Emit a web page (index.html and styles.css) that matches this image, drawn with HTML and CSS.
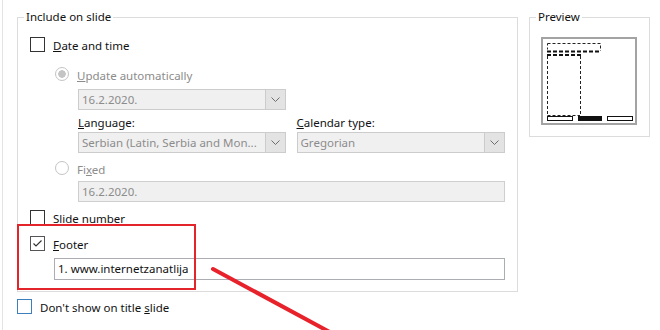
FILE: index.html
```html
<!DOCTYPE html>
<html lang="en">
<head>
    <meta charset="UTF-8">
    <title>Header and Footer</title>
    <link rel="stylesheet" href="styles.css">
</head>

<body>
    <div class="dialog">
        <div class="groups">
            <fieldset class="group include">
                <legend>Include on slide</legend>

                <label class="check"><span class="box"></span><span class="text"><u>D</u>ate and time</span></label>

                <div class="sub">
                    <label class="radio disabled first"><span class="circle"></span><span class="text"><u>U</u>pdate automatically</span></label>

                    <div class="indent">
                        <div class="select disabled date-select">
                            <span class="value">16.2.2020.</span>
                            <span class="drop"><svg width="9" height="5" viewBox="0 0 9 5"><polyline points="0.5,0.5 4.5,4.5 8.5,0.5" fill="none" stroke="#6d6d6d" stroke-width="1"/></svg></span>
                        </div>

                        <div class="pair">
                            <div class="field">
                                <div class="lbl"><u>L</u>anguage:</div>
                                <div class="select disabled">
                                    <span class="value">Serbian (Latin, Serbia and Mon...</span>
                                    <span class="drop"><svg width="9" height="5" viewBox="0 0 9 5"><polyline points="0.5,0.5 4.5,4.5 8.5,0.5" fill="none" stroke="#6d6d6d" stroke-width="1"/></svg></span>
                                </div>
                            </div>
                            <div class="field">
                                <div class="lbl"><u>C</u>alendar type:</div>
                                <div class="select disabled">
                                    <span class="value">Gregorian</span>
                                    <span class="drop"><svg width="9" height="5" viewBox="0 0 9 5"><polyline points="0.5,0.5 4.5,4.5 8.5,0.5" fill="none" stroke="#6d6d6d" stroke-width="1"/></svg></span>
                                </div>
                            </div>
                        </div>
                    </div>

                    <label class="radio disabled second"><span class="circle"></span><span class="text">Fi<u>x</u>ed</span></label>

                    <div class="indent">
                        <div class="textbox disabled fixed-box">16.2.2020.</div>
                    </div>
                </div>

                <label class="check slide-num"><span class="box"></span><span class="text">Slide number</span></label>

                <div class="footer-block">
                    <label class="check"><span class="box checked"><svg width="13" height="13" viewBox="0 0 13 13"><polyline points="2.5,6.5 5,9 10.5,3.5" fill="none" stroke="#333" stroke-width="1.2"/></svg></span><span class="text"><u>F</u>ooter</span></label>
                    <div class="textbox footer-box">1. www.internetzanatlija</div>
                    <div class="highlight"></div>
                </div>
            </fieldset>

            <fieldset class="group preview">
                <legend>Preview</legend>
                <div class="thumb">
                    <svg width="92" height="84" viewBox="0 0 92 84">
                        <!-- title placeholder -->
                        <path d="M4.5 4.5 H57.5 V12" fill="none" stroke="#222" stroke-width="1" stroke-dasharray="3 2"/>
                        <path d="M4.5 4.5 V13" fill="none" stroke="#222" stroke-width="1" stroke-dasharray="2 2"/>
                        <path d="M4 12.5 H57" fill="none" stroke="#111" stroke-width="2" stroke-dasharray="4 2"/>
                        <!-- body placeholder -->
                        <path d="M4 16 H38" fill="none" stroke="#111" stroke-width="2" stroke-dasharray="4 2"/>
                        <path d="M4.5 17 V76" fill="none" stroke="#222" stroke-width="1" stroke-dasharray="3 2"/>
                        <path d="M37.5 17 V77" fill="none" stroke="#222" stroke-width="1" stroke-dasharray="3 2"/>
                        <path d="M4.5 76.5 H37" fill="none" stroke="#222" stroke-width="1" stroke-dasharray="3 2"/>
                        <!-- footer placeholders -->
                        <rect x="4.5" y="77.5" width="25" height="4" fill="#fff" stroke="#111" stroke-width="1"/>
                        <rect x="35" y="77" width="24" height="5" fill="#111"/>
                        <rect x="64.5" y="77.5" width="25" height="4" fill="#fff" stroke="#111" stroke-width="1"/>
                    </svg>
                </div>
            </fieldset>
        </div>

        <label class="check blue"><span class="box"></span><span class="text">Don't show on title <u>s</u>lide</span></label>

        <svg class="arrow" width="660" height="330" viewBox="0 0 660 330">
            <line x1="213" y1="269" x2="350" y2="343" stroke="#e8222b" stroke-width="4" stroke-linecap="round"/>
        </svg>
    </div>
</body>
</html>
```

FILE: styles.css
```css
body {
    margin: 0;
    background-color: #fff;
    font-family: "Noto Sans", "Open Sans", sans-serif;
    font-size: 11.5px;
    color: #111;
    overflow: hidden;
}

.dialog {
    position: relative;
    height: 330px;
    margin-left: 2px;
    border-left: 1px solid #e3e3e3;
}

.groups {
    display: flex;
    align-items: flex-start;
    gap: 11px;
    padding-top: 10px;
    padding-left: 14px;
}

.group {
    margin: 0;
    border: 1px solid #dcdcdc;
    min-inline-size: 0;
}

.group legend {
    padding: 0 2px;
    margin-left: -6px;
    line-height: 14px;
    color: #111;
}

.include {
    width: 475px;
    padding: 13px 12px 11px 12px;
}

.preview {
    width: 96px;
    padding: 13px 12px 11px 11px;
}

.preview legend {
    margin-left: -5px;
}

/* checkboxes and radios */

.check,
.radio {
    display: flex;
    align-items: center;
    gap: 8px;
    height: 15px;
    line-height: 15px;
}

.check .text,
.radio .text {
    padding-top: 2px;
}

.box {
    display: flex;
    width: 13px;
    height: 13px;
    border: 1px solid #333;
    background-color: #fff;
    flex-shrink: 0;
}

.box.checked {
    border-color: #555;
}

.circle {
    width: 12px;
    height: 12px;
    border: 1px solid #c4c4c4;
    border-radius: 50%;
    background-color: #fff;
    flex-shrink: 0;
}

.radio.first .circle {
    background: radial-gradient(circle, #c4c4c4 0 3.5px, #fff 4px);
}

.disabled {
    color: #8c8c8c;
}

.sub {
    margin-left: 25px;
}

.radio {
    height: 14px;
}

.radio.first {
    margin-top: 15px;
}

.radio.second {
    margin-top: 8px;
}

.indent {
    margin-left: 23px;
}

/* dropdowns and text boxes */

.select {
    display: flex;
    height: 21px;
    box-sizing: border-box;
    border: 1px solid #cccccc;
    background-color: #f0f0f0;
}

.select .value {
    flex: 1;
    padding-left: 3px;
    line-height: 19px;
    white-space: nowrap;
    overflow: hidden;
}

.select .drop {
    display: flex;
    align-items: center;
    justify-content: center;
    width: 19px;
    border-left: 1px solid #cccccc;
    background-color: #e3e3e3;
}

.date-select {
    width: 208px;
    margin-top: 8px;
}

.pair {
    display: flex;
    gap: 11px;
    margin-top: 4px;
}

.field {
    width: 208px;
}

.field + .field {
    width: 209px;
}

.lbl {
    line-height: 16px;
    margin-bottom: 2px;
    padding-top: 1px;
    height: 15px;
}

.textbox {
    height: 21px;
    box-sizing: border-box;
    padding-left: 3px;
    line-height: 19px;
    border: 1px solid #cfcfcf;
}

.fixed-box {
    margin-top: 6px;
    background-color: #f0f0f0;
}

.slide-num {
    margin-top: 8px;
}

.footer-block {
    position: relative;
    margin-top: 11px;
}

.footer-box {
    margin-top: 7px;
    margin-left: 24px;
    height: 22px;
    line-height: 20px;
    border-color: #abadb3;
    background-color: #fff;
}

.highlight {
    position: absolute;
    top: -12px;
    left: -13px;
    width: 179px;
    height: 66px;
    box-sizing: border-box;
    border: 2px solid #e3242b;
}

/* preview thumbnail */

.thumb {
    display: flex;
    align-items: center;
    justify-content: center;
    width: 96px;
    height: 88px;
    box-sizing: border-box;
    border: 2px solid #a3a3a3;
    background-color: #fff;
}

/* bottom checkbox */

.blue {
    margin-top: 7px;
    margin-left: 14px;
}

.blue .box {
    border-color: #3d7ebf;
}

.arrow {
    position: absolute;
    top: 0;
    left: -3px;
    pointer-events: none;
}
```
